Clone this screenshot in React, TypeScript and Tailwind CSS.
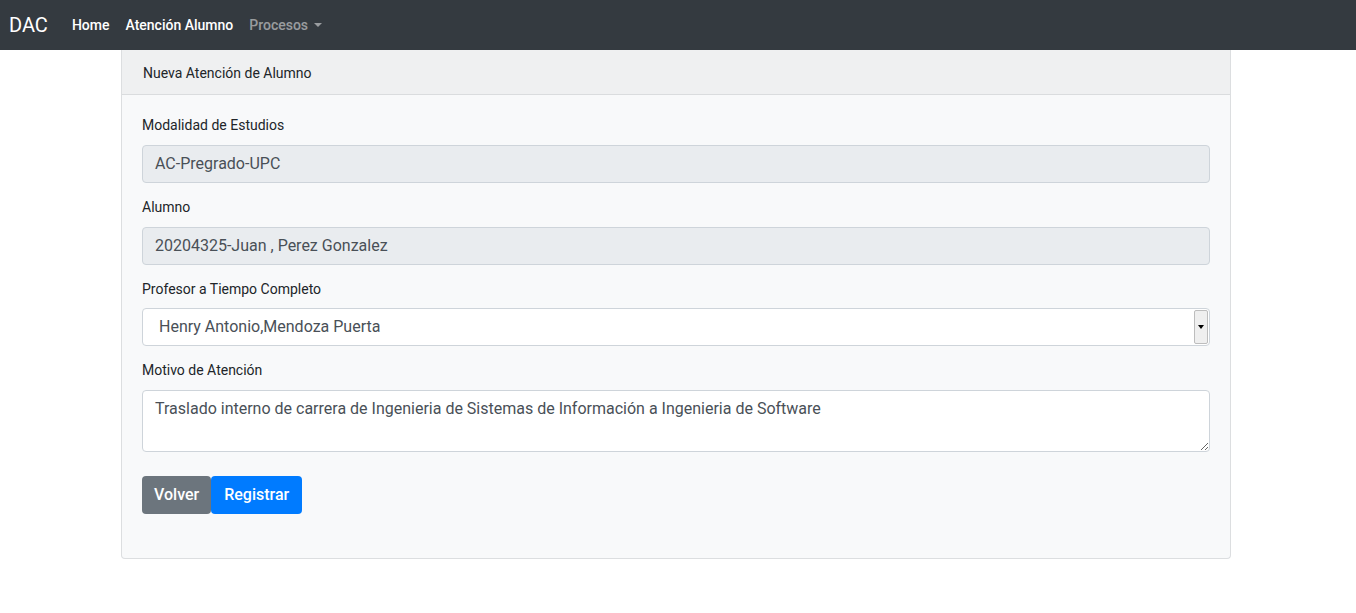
import React from "react";

export default function App() {
  return (
    <div className="min-h-[613px] bg-white text-[#212529]" style={{ fontFamily: "Roboto, 'Helvetica Neue', Arial, sans-serif" }}>
      <nav className="h-[50px] bg-[#343a40] flex items-center px-[9px]">
        <span className="text-white text-[20px] leading-none mr-[24px]">DAC</span>
        <div className="flex items-center gap-[16px] text-[14px] font-medium">
          <span className="text-white">Home</span>
          <span className="text-white">Atención Alumno</span>
          <span className="text-white/50 flex items-center">
            Procesos
            <span className="ml-[6px] inline-block w-0 h-0 border-l-[4px] border-r-[4px] border-t-[4px] border-l-transparent border-r-transparent border-t-white/50"></span>
          </span>
        </div>
      </nav>
      <div className="mx-[121px] w-[1110px] border border-[#dcdee0] border-t-0 rounded-b-[4px] bg-[#f8f9fa]">
        <div className="h-[45px] bg-[#eff0f1] border-b border-[#dadcde] flex items-center pt-[2px] px-[21px] text-[14px]">
          Nueva Atención de Alumno
        </div>
        <div className="px-[20px] pt-[20px] pb-[44px] text-[14px]">
          <div className="mb-[14px]">
            <div className="leading-[21px] mb-[9px] pt-[1px] -mt-[1px]">Modalidad de Estudios</div>
            <div className="h-[38px] bg-[#e9ecef] border border-[#ced4da] rounded-[4px] flex items-center px-[12px] text-[16px] text-[#495057]">
              AC-Pregrado-UPC
            </div>
          </div>
          <div className="mb-[14px]">
            <div className="leading-[21px] mb-[9px] pt-[1px] -mt-[1px]">Alumno</div>
            <div className="h-[38px] bg-[#e9ecef] border border-[#ced4da] rounded-[4px] flex items-center px-[12px] text-[16px] text-[#495057]">
              20204325-Juan , Perez Gonzalez
            </div>
          </div>
          <div className="mb-[14px]">
            <div className="leading-[21px] mb-[8px] pt-[1px] -mt-[1px]">Profesor a Tiempo Completo</div>
            <div className="h-[38px] bg-white border border-[#ced4da] rounded-[4px] flex items-center text-[16px] text-[#495057]">
              <span className="flex-1 pl-[16px]">Henry Antonio,Mendoza Puerta</span>
              <span className="h-[34px] w-[14px] mr-[1px] bg-[#efefef] border border-[#bdbdbd] rounded-[2px] flex items-center justify-center">
                <span className="inline-block w-0 h-0 border-l-[3px] border-r-[3px] border-t-[4px] border-l-transparent border-r-transparent border-t-black"></span>
              </span>
            </div>
          </div>
          <div className="mb-[24px]">
            <div className="leading-[21px] mb-[9px] pt-[1px] -mt-[1px]">Motivo de Atención</div>
            <textarea
              readOnly
              defaultValue="Traslado interno de carrera de Ingenieria de Sistemas de Información a Ingenieria de Software"
              className="block w-full h-[62px] bg-white border border-[#ced4da] rounded-[4px] px-[12px] py-[6px] text-[16px] text-[#495057] leading-[24px] outline-none"
              style={{ fontFamily: "Roboto, 'Helvetica Neue', Arial, sans-serif" }}
            />
          </div>
          <div className="flex">
            <button className="h-[38px] px-[12px] bg-[#6c757d] text-white text-[16px] font-medium rounded-[4px]">Volver</button>
            <button className="h-[38px] px-[13px] bg-[#007bff] text-white text-[16px] font-medium rounded-[4px]">Registrar</button>
          </div>
        </div>
      </div>
    </div>
  );
}
